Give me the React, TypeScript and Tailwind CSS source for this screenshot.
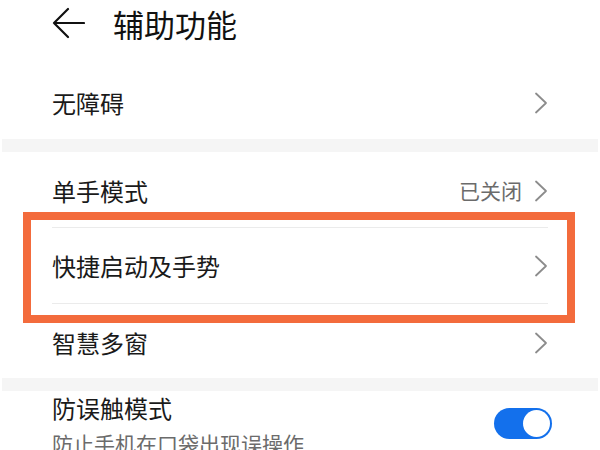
import React from 'react'

function Chevron() {
  return (
    <svg width="14" height="22" viewBox="0 0 14 22" fill="none" className="shrink-0">
      <path d="M2 1.5 L12 11 L2 20.5" stroke="#8c8c8c" strokeWidth="1.8" strokeLinecap="round" strokeLinejoin="round" />
    </svg>
  )
}

function Row({ label, value, className }: { label: string; value?: string; className?: string }) {
  return (
    <div className={`flex items-center justify-between ${className ?? ''}`}>
      <span className="text-[24px] text-[#1a1a1a]">{label}</span>
      <div className="flex items-center gap-[12px]">
        {value && <span className="text-[21px] text-[#6b6b6b]">{value}</span>}
        <Chevron />
      </div>
    </div>
  )
}

export default function App() {
  return (
    <div
      className="w-[600px] h-[450px] overflow-hidden bg-white"
      style={{ fontFamily: '"Noto Sans CJK SC", "Noto Sans", sans-serif' }}
    >
      {/* header */}
      <div className="h-[44px] flex items-center pl-[52px] pt-[1px]">
        <svg width="33" height="32" viewBox="0 0 33 32" fill="none">
          <path d="M16 2 L2 16 L16 30 M2 16 H32" stroke="#111" strokeWidth="2.2" strokeLinecap="round" strokeLinejoin="round" />
        </svg>
        <span className="ml-[28px] text-[31px] leading-none text-[#111] pt-[2px]">辅助功能</span>
      </div>

      <div className="h-[22px]" />
      <Row label="无障碍" className="h-[73px] px-[52px]" />

      <div className="h-[13px] mx-[2px] bg-[#f5f5f5]" />

      <Row label="单手模式" value="已关闭" className="h-[75px] px-[52px] pt-[3px]" />
      <div className="mx-[52px] h-px bg-[#ebebeb]" />

      <div className="relative">
        <Row label="快捷启动及手势" className="h-[75px] px-[52px] pt-[1px]" />
        <div className="absolute left-[23px] right-[25px] top-[-16px] bottom-[-20px] border-[8px] border-[#f36b3c] pointer-events-none" />
      </div>
      <div className="mx-[52px] h-px bg-[#ebebeb]" />

      <Row label="智慧多窗" className="h-[74px] px-[52px] pt-[3px]" />

      <div className="h-[13px] mx-[2px] bg-[#f5f5f5]" />

      <div className="flex items-start justify-between pr-[48px] pl-[52px] pt-[3px]">
        <div className="flex flex-col">
          <span className="text-[24px] leading-[28px] text-[#1a1a1a]">防误触模式</span>
          <span className="mt-[7px] text-[21px] leading-[28px] text-[#6b6b6b] whitespace-nowrap">防止手机在口袋出现误操作</span>
        </div>
        <div className="mt-[14px] w-[58px] h-[31px] rounded-full bg-[#1370ec] flex items-center justify-end pr-[2px]">
          <div className="w-[27px] h-[27px] rounded-full bg-white" />
        </div>
      </div>
    </div>
  )
}
